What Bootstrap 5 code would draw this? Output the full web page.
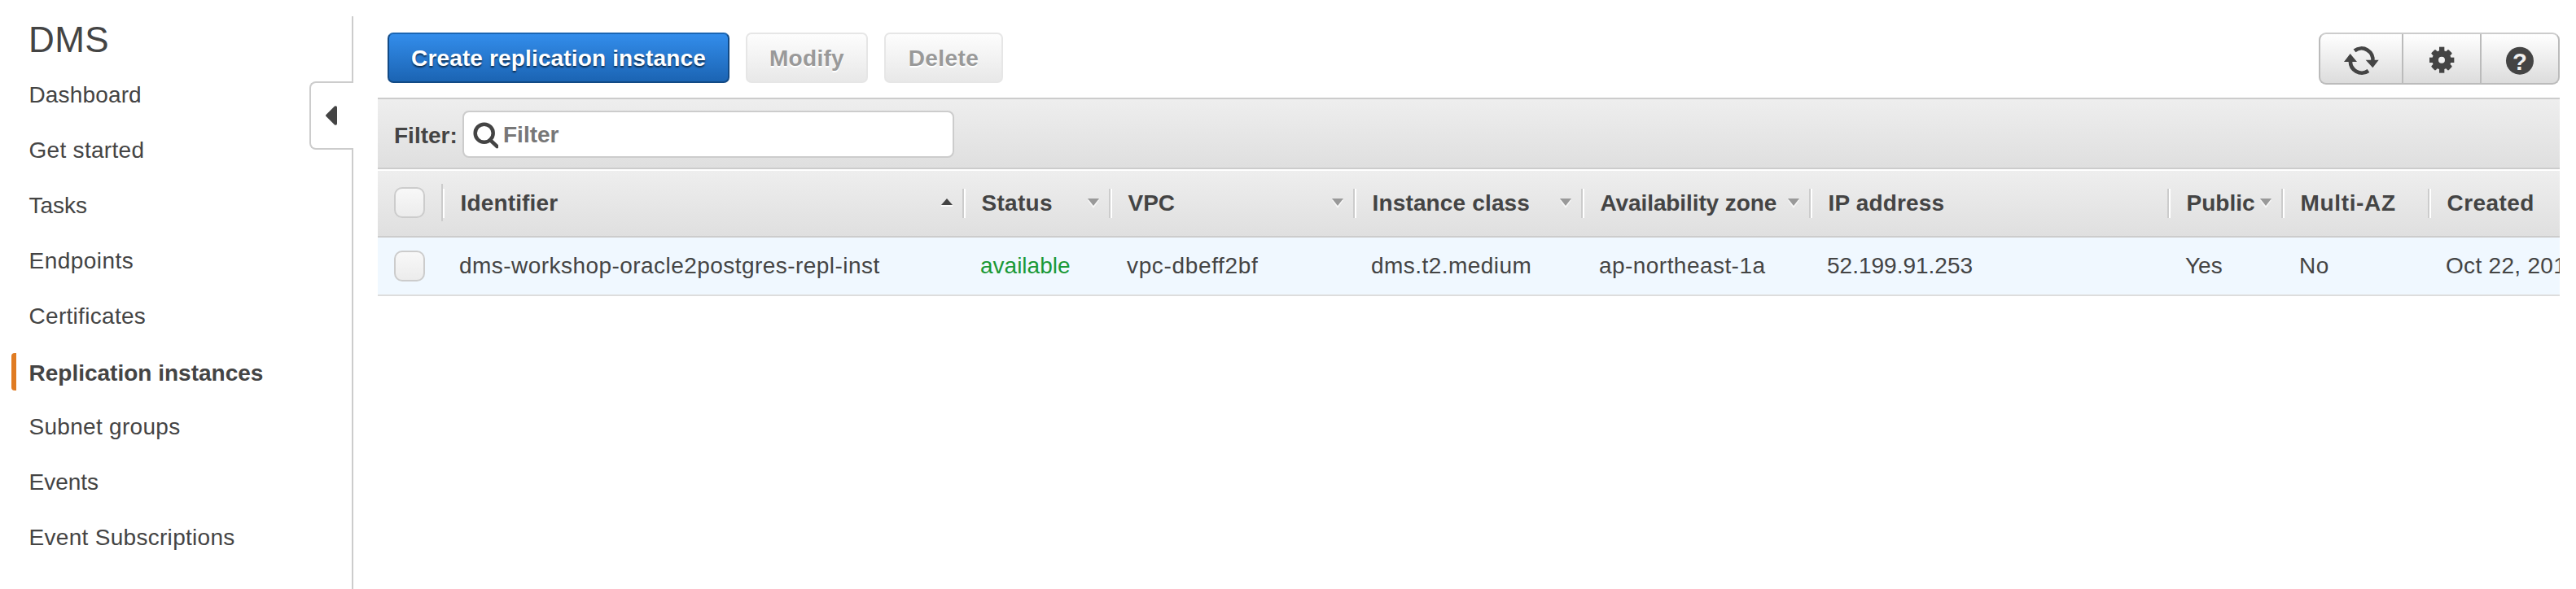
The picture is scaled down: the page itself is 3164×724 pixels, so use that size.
<!DOCTYPE html>
<html lang="en">
<head>
<meta charset="utf-8">
<title>DMS - Replication instances</title>
<link rel="stylesheet" href="https://cdn.jsdelivr.net/npm/bootstrap@5.3.0/dist/css/bootstrap.min.css">
<style>
body{font-family:"Liberation Sans",Arial,sans-serif;font-size:28px;line-height:34px;color:#444;background:#fff}
.console{height:724px;overflow:hidden}
/* letter-spacing steps */
.t0{letter-spacing:.15px}.t1{letter-spacing:.3px}.t2{letter-spacing:.45px}.t3{letter-spacing:.65px}
/* sidebar */
.side{width:464px;padding-top:28px}
.side h1{font-size:44px;line-height:44px;letter-spacing:.4px;margin:-1px 0 0 35px;color:#444}
.side .nav{margin-top:29px}
.side .nav-link{color:#444;padding:0 0 0 35.5px;height:34px;margin-bottom:34px;line-height:34px}
.side .nav-link.active{position:relative;top:2px;font-weight:700}
.side .nav-link.active::before{content:"";position:absolute;left:14px;top:-8px;width:6px;height:46px;background:#e07b22;border-radius:4px 0 0 4px}
.rule{position:absolute;left:432px;top:20px;width:2px;height:704px;background:#ccc}
.fold{position:absolute;left:380px;top:100px;width:54px;height:84px;padding:0;border:2px solid #ccc;border-right:0;border-radius:8px 0 0 8px;background:#fff}
.fold svg{position:absolute;left:18px;top:28px}
/* toolbar */
.main{width:2680px;padding-top:40px}
.tools{height:80px;padding-left:12px}
.tools .btn-x{height:62px;border-radius:7px;font-weight:700;font-size:28px;padding:2px 0 0;line-height:34px}
.btn-create,.btn-create:hover{width:420px;color:#fff;border:2px solid #124a85;border-top-color:#1b66b3;background:linear-gradient(#338deb,#1b64b3);text-shadow:0 2px 2px rgba(0,0,0,.6)}
.btn-off{color:#999;border:2px solid #e6e6e6;background:linear-gradient(#fdfdfd,#e8e8e8);text-shadow:0 2px 0 #fff}
.btn-modify{width:150px;margin-left:20px}
.btn-delete{width:146px;margin-left:20px}
.icons{width:296px;height:64px;border:2px solid #bbb;border-top-color:#ccc;border-radius:9px;background:linear-gradient(#fff,#dcdcdc);overflow:hidden}
.icons button{border:0;background:none;padding:0;color:#444;width:96px}
.icons button:first-child{width:100px}
.icons button+button{border-left:2px solid #bbb}
/* filter bar */
.filter{height:88px;border-top:2px solid #ccc;border-bottom:2px solid #ccc;background:linear-gradient(#eee,#dfdfdf);padding:14px 0 0 20px}
.filter label{width:84px;font-weight:700;margin-top:14px}
.box{width:604px;height:58px;border:2px solid #ccc;border-radius:8px;background:#fff;padding-left:10px}
.box input{border:0;outline:0;padding:0;margin:2px 0 0 6px;font-weight:700;height:34px;width:520px;background:none}
.box input::placeholder{color:#777;opacity:1}
/* instances table */
.grid-t{table-layout:fixed;width:2680px;margin:0;border-top:2px solid #fff;border-collapse:separate;border-spacing:0}
.grid-t th,.grid-t td{padding:0;white-space:nowrap;box-shadow:none;color:#444;overflow:hidden;vertical-align:middle}
.grid-t thead{background:linear-gradient(#eee,#dfdfdf)}
.grid-t th{height:82px;background:transparent;border-bottom:2px solid #ccc}
.grid-t td{height:72px;border-bottom:2px solid #ddd;background:#f0f8ff;padding-left:20px}
.grid-t td.ok{color:#1a9936}
.cell{height:36px;line-height:36px;border-left:2px solid #fff;border-right:2px solid #ccc;padding:0 12px 0 19.5px}
.grid-t th.pick{padding-bottom:2px}
.pick .cell{height:46px;border-left:0;padding-left:20px}
th:last-child .cell{border-right:0}
.tick{display:block;width:38px;height:38px;border:2px solid #ccc;border-radius:10px;background:linear-gradient(#f8f8f8,#ececec)}
.c0{width:80px}.c1{width:640px}.c2{width:180px}.c3{width:300px}.c4{width:280px}.c5{width:280px}.c6{width:440px}.c7{width:140px}.c8{width:180px}.c9{width:160px}
.arr{flex:none;margin-right:0}
</style>
</head>
<body>
<svg class="d-none">
  <symbol id="down" viewBox="0 0 14 12"><path d="M0 2h14L7 12z" fill="#fff" opacity=".7"/><path d="M0 0h14L7 9z" fill="#999"/></symbol>
  <symbol id="up" viewBox="0 0 14 12"><path d="M0 8h14v2H0z" fill="#fff" opacity=".8"/><path d="M7 0l7 8H0z" fill="#444"/></symbol>
</svg>
<div class="console d-flex position-relative">
  <aside class="side flex-shrink-0">
    <h1 class="fw-normal">DMS</h1>
    <nav class="nav flex-column">
      <a class="nav-link t0" href="#">Dashboard</a>
      <a class="nav-link t1" href="#">Get started</a>
      <a class="nav-link" href="#">Tasks</a>
      <a class="nav-link t2" href="#">Endpoints</a>
      <a class="nav-link t1" href="#">Certificates</a>
      <a class="nav-link active" href="#">Replication instances</a>
      <a class="nav-link t1" href="#">Subnet groups</a>
      <a class="nav-link" href="#">Events</a>
      <a class="nav-link t1" href="#">Event Subscriptions</a>
    </nav>
    <div class="rule"></div>
    <button class="fold" aria-label="Collapse"><svg class="d-block" width="14" height="24" viewBox="0 0 14 24"><path d="M.5 11 11 .5Q14-.5 14 2v20q0 2.500-3 1.500L.5 13q-1-1 0-2z" fill="#444"/></svg></button>
  </aside>

  <main class="main flex-shrink-0">
    <div class="tools d-flex align-items-start">
      <button class="btn btn-x btn-create t0">Create replication instance</button>
      <button class="btn btn-x btn-off btn-modify t1">Modify</button>
      <button class="btn btn-x btn-off btn-delete t2">Delete</button>
      <div class="icons d-flex ms-auto">
        <button class="d-flex align-items-center justify-content-center" aria-label="Refresh">
          <svg width="50" height="43.330" viewBox="27 13 150 130"><g fill="none" stroke="#444" stroke-width="14"><path d="M78 50A42 42 0 0 1 145 90"/><path d="M129 124A42 42 0 0 1 63 86"/></g><path d="M119 84h48l-22 29zM39 91h48L62 61z" fill="#444"/></svg>
        </button>
        <button class="d-flex align-items-center justify-content-center" aria-label="Settings">
          <svg width="40" height="43.330" viewBox="39 13 120 130"><g fill="#444"><rect x="90" y="36" width="19" height="96"/><rect x="54" y="75" width="91" height="19"/><rect x="88" y="39" width="22" height="90" rx="4" transform="rotate(45 99 84)"/><rect x="88" y="39" width="22" height="90" rx="4" transform="rotate(-45 99 84)"/><circle cx="99" cy="84" r="35"/></g><circle cx="99" cy="84" r="12" fill="#f0f0f0"/></svg>
        </button>
        <button class="d-flex align-items-center justify-content-center" aria-label="Help">
          <svg width="40" height="43.330" viewBox="45 13 120 130"><circle cx="105" cy="87" r="51" fill="#444"/><text x="105" y="120" text-anchor="middle" font-size="88" font-weight="700" fill="#f0f0f0">?</text></svg>
        </button>
      </div>
    </div>

    <div class="filter d-flex align-items-start">
      <label for="q">Filter:</label>
      <div class="box d-flex align-items-center">
        <svg width="32" height="36" viewBox="0 0 32 36" fill="none" stroke="#444"><circle cx="14.700" cy="16.700" r="11" stroke-width="4.500"/><path d="M22 25l8.500 8" stroke-width="4.500" stroke-linecap="round"/></svg>
        <input id="q" type="text" placeholder="Filter">
      </div>
    </div>

    <table class="table grid-t">
      <colgroup><col class="c0"><col class="c1"><col class="c2"><col class="c3"><col class="c4"><col class="c5"><col class="c6"><col class="c7"><col class="c8"><col class="c9"></colgroup>
      <thead>
        <tr>
          <th class="pick"><div class="cell d-flex align-items-center"><i class="tick"></i></div></th>
          <th><div class="cell d-flex align-items-center justify-content-between"><span class="t0">Identifier</span><svg class="arr" width="14" height="12"><use href="#up"/></svg></div></th>
          <th><div class="cell d-flex align-items-center justify-content-between"><span class="t1">Status</span><svg class="arr" width="14" height="12"><use href="#down"/></svg></div></th>
          <th><div class="cell d-flex align-items-center justify-content-between"><span>VPC</span><svg class="arr" width="14" height="12"><use href="#down"/></svg></div></th>
          <th><div class="cell d-flex align-items-center justify-content-between"><span class="t0">Instance class</span><svg class="arr" width="14" height="12"><use href="#down"/></svg></div></th>
          <th><div class="cell d-flex align-items-center justify-content-between"><span style="letter-spacing:-.1px">Availability zone</span><svg class="arr" width="14" height="12"><use href="#down"/></svg></div></th>
          <th><div class="cell t0">IP address</div></th>
          <th><div class="cell d-flex align-items-center justify-content-between"><span>Public</span><svg class="arr" width="14" height="12"><use href="#down"/></svg></div></th>
          <th><div class="cell t3">Multi-AZ</div></th>
          <th><div class="cell t2">Created</div></th>
        </tr>
      </thead>
      <tbody>
        <tr>
          <td><i class="tick"></i></td>
          <td class="t2">dms-workshop-oracle2postgres-repl-inst</td>
          <td class="ok">available</td>
          <td class="t3">vpc-dbeff2bf</td>
          <td class="t2">dms.t2.medium</td>
          <td class="t2">ap-northeast-1a</td>
          <td>52.199.91.253</td>
          <td>Yes</td>
          <td class="t3">No</td>
          <td class="t1">Oct 22, 201</td>
        </tr>
      </tbody>
    </table>
  </main>
</div>
<script src="https://cdn.jsdelivr.net/npm/bootstrap@5.3.0/dist/js/bootstrap.bundle.min.js"></script>
</body>
</html>
